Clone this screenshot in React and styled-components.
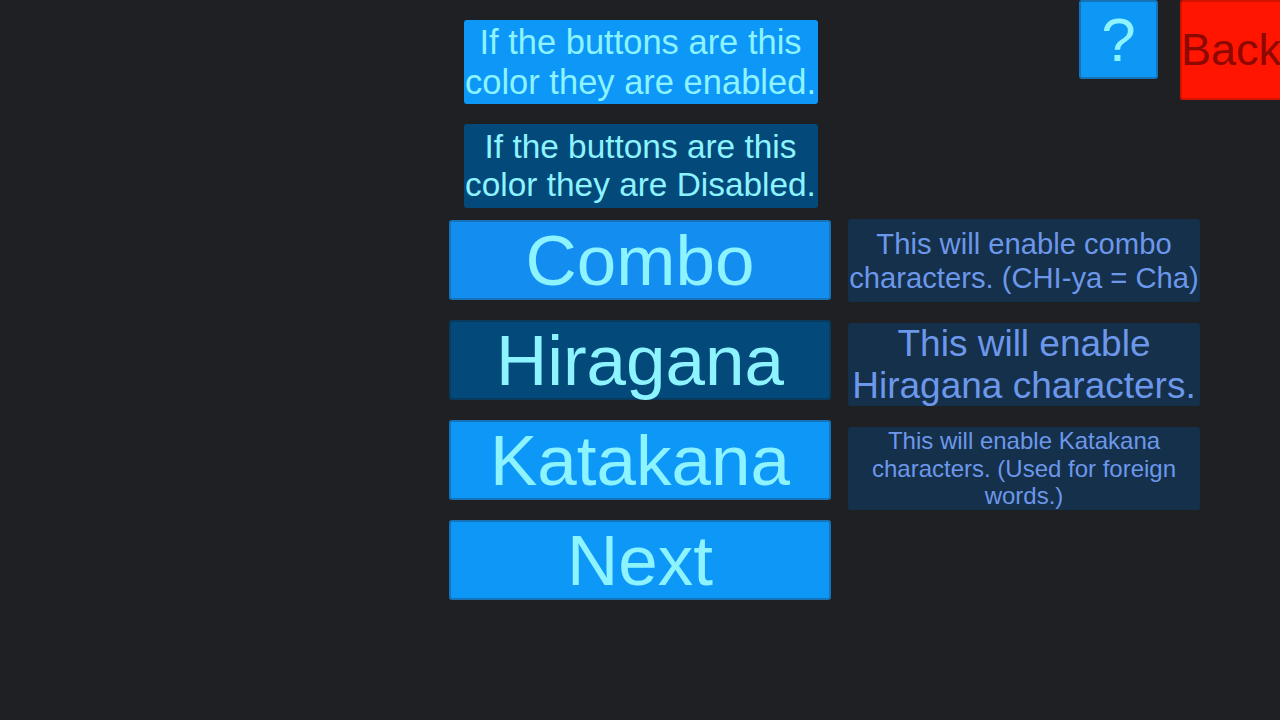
import React from 'react'
import styled, { createGlobalStyle } from 'styled-components'

const GlobalStyle = createGlobalStyle`
  html, body {
    margin: 0;
    padding: 0;
    background: #1f2023;
  }
  * {
    box-sizing: border-box;
  }
`

const colors = {
  page: '#1f2023',
  enabled: '#0d97f7',
  enabledEdge: '#1673b8',
  disabled: '#03497a',
  disabledEdge: '#0a3a5e',
  cyan: '#8cf3ff',
  descBg: '#14304a',
  descText: '#6d97ea',
  red: '#ff1500',
  redText: '#8c0800'
}

const Page = styled.div`
  display: grid;
  width: 1280px;
  height: 720px;
  overflow: hidden;
  background: ${colors.page};
  font-family: "Liberation Sans", Arial, sans-serif;
  > * {
    grid-area: 1 / 1;
  }
`

const Main = styled.div`
  display: flex;
  gap: 17px;
  padding: 20px 0 0 449px;
`

const LeftColumn = styled.div`
  display: flex;
  flex-direction: column;
  align-items: center;
  width: 382px;
`

const InfoGroup = styled.div`
  display: flex;
  flex-direction: column;
  gap: 20px;
  margin: 0 0 12px 1px;
`

const InfoBox = styled.div`
  display: flex;
  align-items: center;
  justify-content: center;
  width: 354px;
  height: 84px;
  border-radius: 3px;
  background: ${props => (props.disabled ? colors.disabled : colors.enabled)};
  color: ${colors.cyan};
  font-size: ${props => props.size}px;
  line-height: ${props => props.lh}px;
  text-align: center;
  white-space: nowrap;
`

const ButtonGroup = styled.div`
  display: flex;
  flex-direction: column;
  gap: 20px;
`

const MenuButton = styled.button`
  display: flex;
  align-items: center;
  justify-content: center;
  width: 382px;
  height: 80px;
  padding: 0;
  border: 2px solid ${props => (props.disabled ? colors.disabledEdge : colors.enabledEdge)};
  border-radius: 3px;
  background: ${props => props.tint || (props.disabled ? colors.disabled : colors.enabled)};
  color: ${colors.cyan};
  font-family: inherit;
  font-size: 71px;
  line-height: 1;
  cursor: pointer;
`

const RightColumn = styled.div`
  display: flex;
  flex-direction: column;
  gap: 21px;
  width: 352px;
  padding-top: 199px;
`

const DescBox = styled.div`
  display: flex;
  align-items: center;
  justify-content: center;
  height: 83px;
  padding: 0 1px;
  border-radius: 3px;
  background: ${colors.descBg};
  color: ${colors.descText};
  font-size: ${props => props.size}px;
  line-height: ${props => props.lh}px;
  text-align: center;
`

const CornerBar = styled.div`
  display: flex;
  align-items: flex-start;
  justify-self: end;
  align-self: start;
  gap: 22px;
`

const HelpButton = styled.button`
  display: flex;
  align-items: center;
  justify-content: center;
  width: 79px;
  height: 79px;
  padding: 0;
  border: 2px solid ${colors.enabledEdge};
  border-radius: 3px;
  background: #0d98f5;
  color: ${colors.cyan};
  font-family: inherit;
  font-size: 62px;
  line-height: 1;
`

const BackButton = styled.button`
  display: flex;
  align-items: center;
  justify-content: center;
  width: 100px;
  height: 100px;
  padding: 0 0 2px 0;
  border: 2px solid #d41200;
  border-right: none;
  border-radius: 3px 0 0 3px;
  background: ${colors.red};
  color: ${colors.redText};
  font-family: inherit;
  font-size: 45px;
  line-height: 1;
  overflow: hidden;
`

export default function App () {
  return (
    <Page>
      <GlobalStyle />
      <Main>
        <LeftColumn>
          <InfoGroup>
            <InfoBox size={34.5} lh={40}>
              If the buttons are this<br />color they are enabled.
            </InfoBox>
            <InfoBox disabled size={33.4} lh={38}>
              If the buttons are this<br />color they are Disabled.
            </InfoBox>
          </InfoGroup>
          <ButtonGroup>
            <MenuButton tint='#138ef0'>Combo</MenuButton>
            <MenuButton disabled>Hiragana</MenuButton>
            <MenuButton>Katakana</MenuButton>
            <MenuButton>Next</MenuButton>
          </ButtonGroup>
        </LeftColumn>
        <RightColumn>
          <DescBox size={29.2} lh={34}>
            This will enable combo characters. (CHI-ya = Cha)
          </DescBox>
          <DescBox size={37} lh={42}>
            This will enable Hiragana characters.
          </DescBox>
          <DescBox size={24} lh={27.5}>
            This will enable Katakana characters. (Used for foreign words.)
          </DescBox>
        </RightColumn>
      </Main>
      <CornerBar>
        <HelpButton>?</HelpButton>
        <BackButton>Back</BackButton>
      </CornerBar>
    </Page>
  )
}
